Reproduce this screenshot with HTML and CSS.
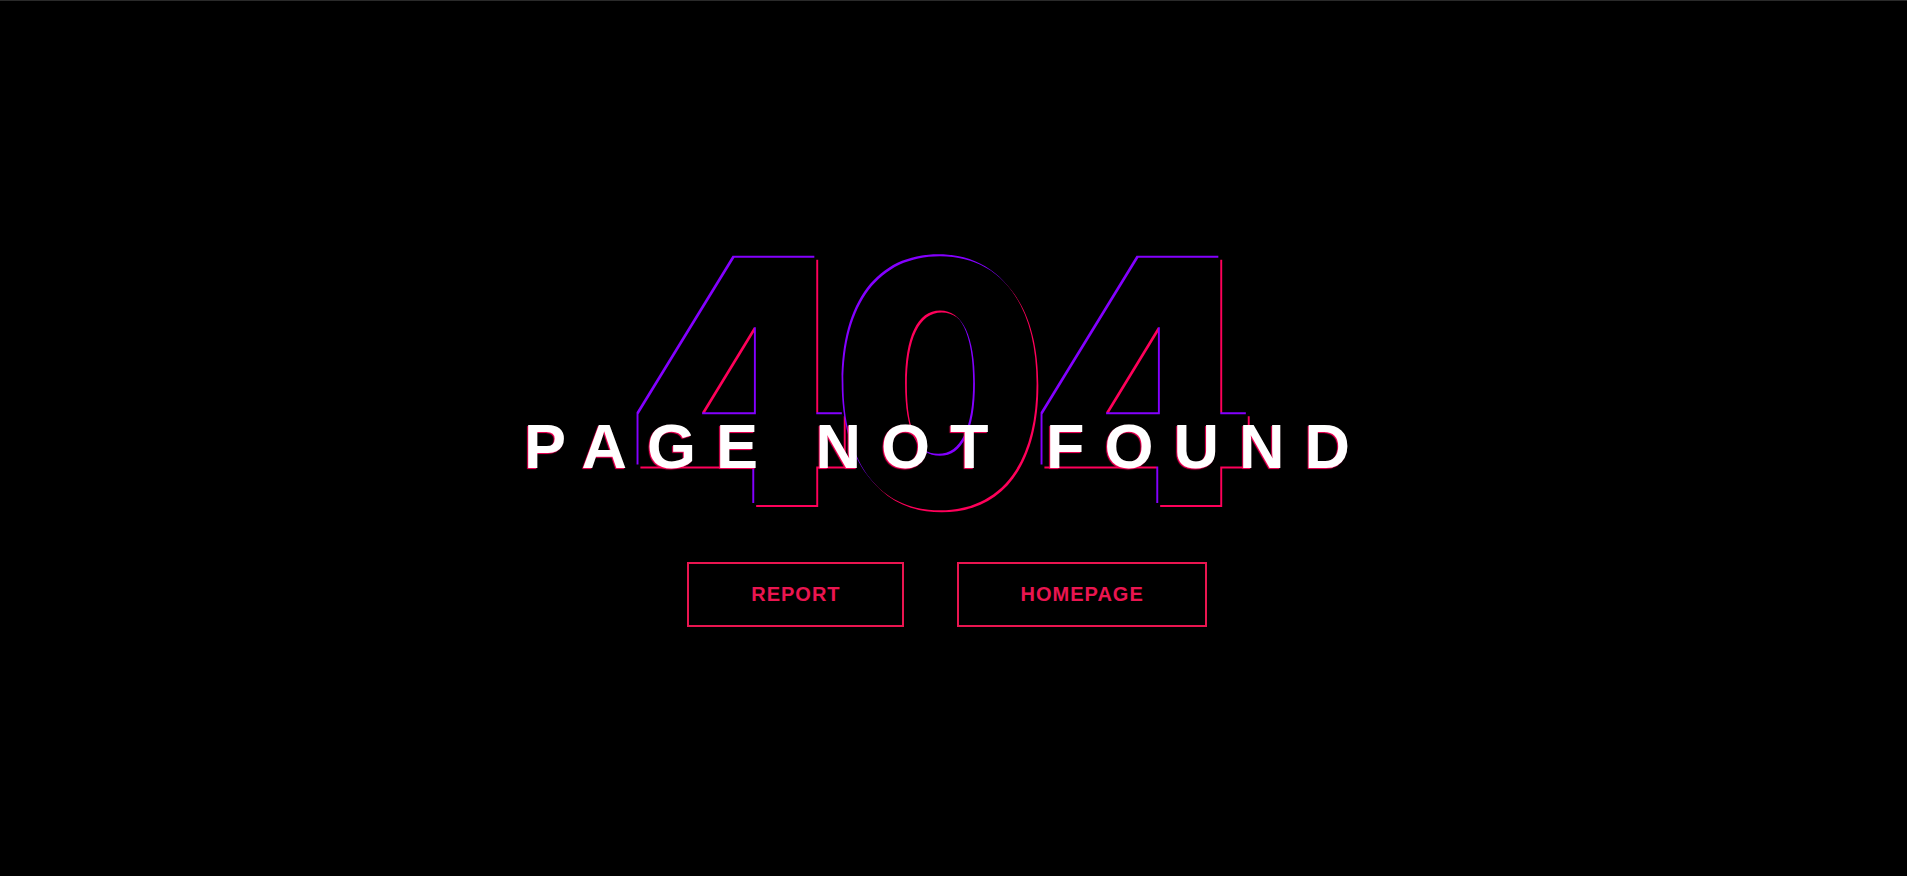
FILE: index.html
```html
<!DOCTYPE html>
<html>
<head>
<meta charset="utf-8">
<title>404 - Page not found</title>
<link rel="stylesheet" href="styles.css">
</head>
<body>
<main class="page">
  <section class="notfound">
    <div class="hero">
      <h1 class="num"><span class="digit digit-four-a">4</span><span class="digit digit-zero">0</span><span class="digit digit-four-b">4</span></h1>
      <h2 class="title">Page not found</h2>
    </div>
    <div class="actions">
      <a class="btn btn-report" href="#">Report</a>
      <a class="btn btn-home" href="#">Homepage</a>
    </div>
  </section>
</main>
</body>
</html>
```
FILE: styles.css
```css
html, body {
  margin: 0;
  padding: 0;
  background: #000;
}
body {
  font-family: "Liberation Sans", Arial, sans-serif;
}
.page {
  box-sizing: border-box;
  min-height: 876px;
  border-top: 1px solid #2a2a2a;
  padding-top: 211px;
  padding-right: 13px;
  display: flex;
  flex-direction: column;
  align-items: center;
}
.notfound {
  display: flex;
  flex-direction: column;
  align-items: center;
}
.hero {
  display: grid;
  align-items: start;
  justify-items: center;
}
.num {
  grid-area: 1 / 1;
  display: flex;
  justify-content: center;
  margin: 0 6px 0 0;
  font-family: "Inter", "Liberation Sans", sans-serif;
  font-weight: 900;
  font-size: 340px;
  line-height: 1;
  color: #000;
  text-shadow: -2px -2px 0 #8400ff, 2px 2px 0 #ff005a;
}
.digit {
  display: flex;
  justify-content: center;
}
.digit-four-a {
  width: 200px;
  transform: scaleX(0.963);
}
.digit-zero {
  width: 200px;
  transform: translateY(2px) scaleX(0.884);
}
.digit-four-b {
  width: 208px;
  transform: scaleX(0.963);
}
.title {
  grid-area: 1 / 1;
  position: relative;
  z-index: 1;
  margin: 203px 0 0 0;
  font-family: "Liberation Sans", Arial, sans-serif;
  font-weight: 700;
  font-size: 63px;
  line-height: 1;
  letter-spacing: 20px;
  text-transform: uppercase;
  color: #fff;
  white-space: nowrap;
  text-shadow: -1px 1px 1px #ff005a;
}
.actions {
  display: flex;
  gap: 53px;
  margin-top: 10px;
}
.btn {
  display: block;
  padding: 20px 61px 20px 62px;
  border: 2px solid #ea1550;
  color: #ea1550;
  font-family: "Liberation Sans", Arial, sans-serif;
  font-weight: 700;
  font-size: 20px;
  line-height: 21px;
  letter-spacing: 1px;
  text-transform: uppercase;
  text-decoration: none;
}
```
